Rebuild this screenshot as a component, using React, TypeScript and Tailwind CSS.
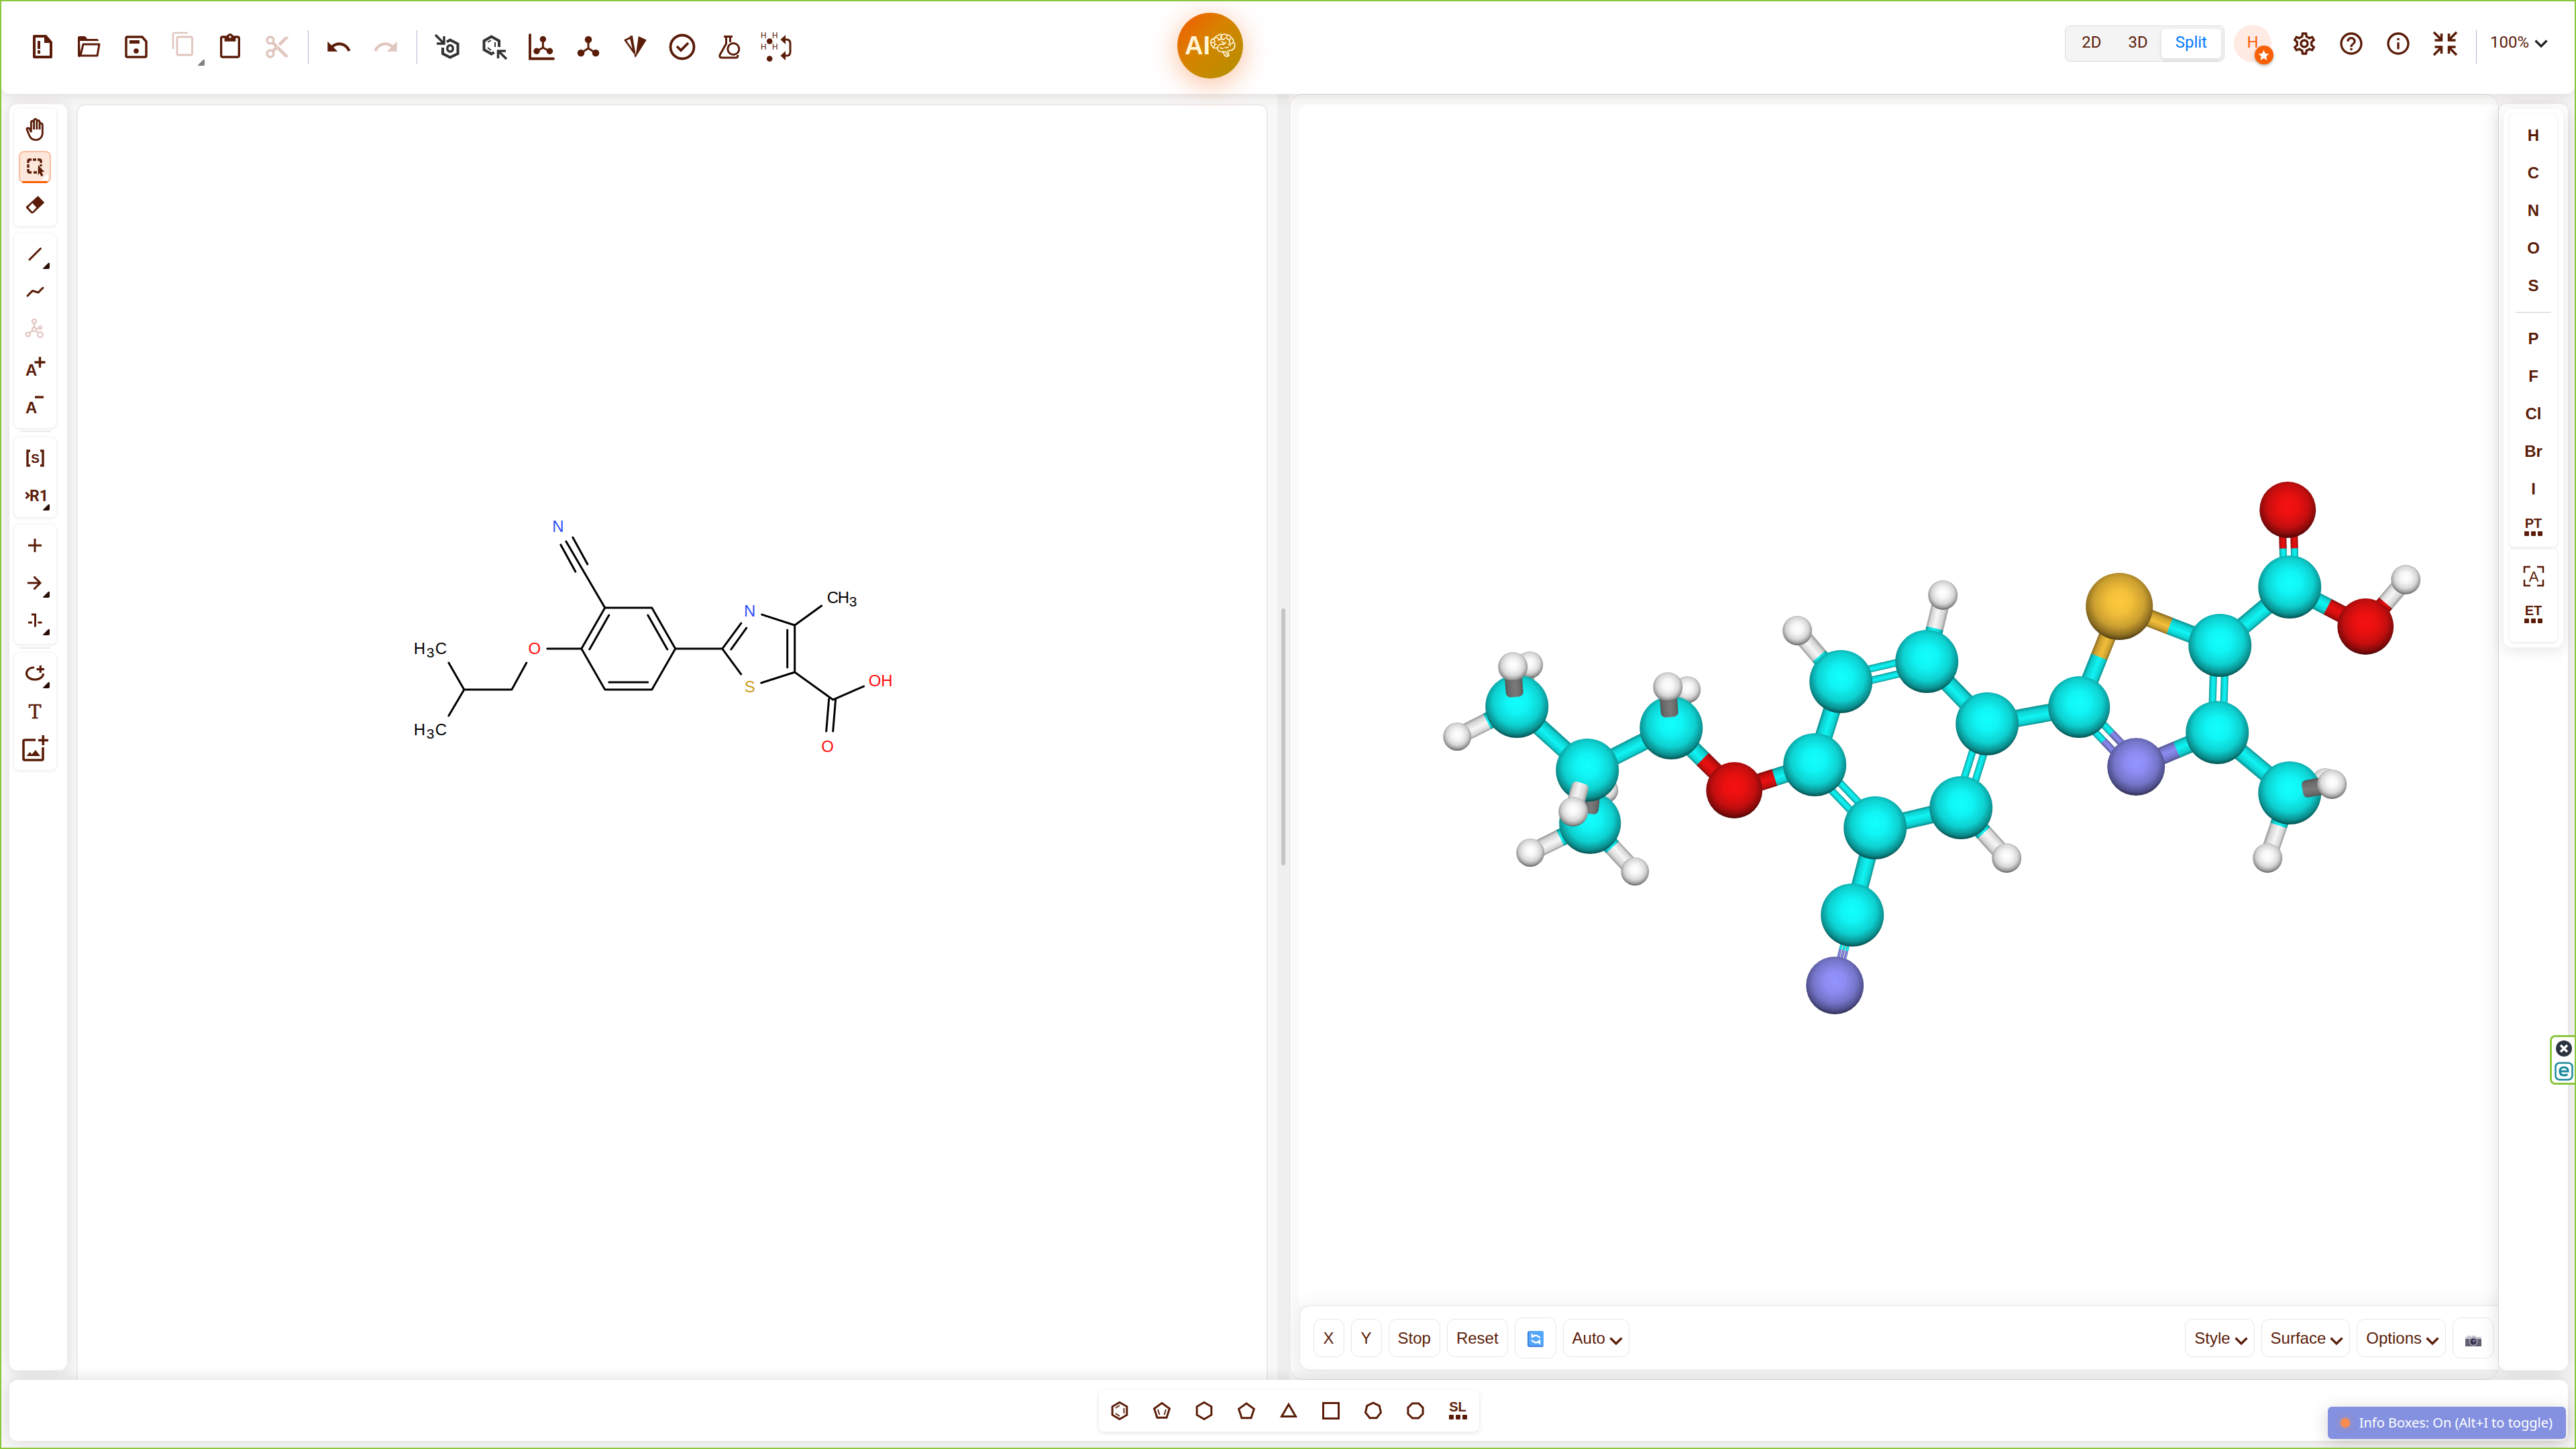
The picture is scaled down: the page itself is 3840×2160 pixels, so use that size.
import React from "react";
import {
  MdContentPaste,
  MdContentCut,
  MdUndo,
  MdRedo,
  MdOutlineSettings,
  MdHelpOutline,
  MdInfoOutline,
  MdOutlineBackHand,
  MdStar,
} from "react-icons/md";

type Kids = { children?: React.ReactNode };

function Icon({ children, className = "" }: Kids & { className?: string }) {
  return (
    <svg
      viewBox="0 0 40 40"
      className={`size-10 overflow-visible ${className}`}
      fill="none"
      stroke="currentColor"
      strokeWidth={3}
      aria-hidden="true"
    >
      {children}
    </svg>
  );
}

/* ---------- header ---------- */

function TopButton({ label, children, muted, more }: Kids & { label: string; muted?: boolean; more?: boolean }) {
  return (
    <button
      type="button"
      aria-label={label}
      title={label}
      className={`relative flex size-14 shrink-0 items-center justify-center ${muted ? "text-[#e0c6be]" : "text-[#5a1c08]"}`}
    >
      {children}
      {more && (
        <svg viewBox="0 0 10 10" className="absolute -right-1 bottom-0 size-2.5 fill-[#808080]" aria-hidden="true">
          <path d="M0 9 8 1q2-1 2 1v6q0 2-2 2H1Q0 10 0 9z" />
        </svg>
      )}
    </button>
  );
}

function Divider() {
  return <div className="mr-[3px] ml-1 h-[50px] w-px shrink-0 bg-[#b4b6cc]" />;
}

function FileIcon() {
  return (
    <Icon>
      <path d="M9 4h16l8 9v22H8V4z" strokeWidth={4} strokeLinejoin="round" />
      <path d="M23 3v11h12L26 2z" fill="currentColor" stroke="none" />
      <path d="M13 11h4v12h-4zM13 25h4v5h-4z" fill="currentColor" stroke="none" />
    </Icon>
  );
}

function FolderIcon() {
  return (
    <Icon>
      <path
        d="M5 4h9l3 4h14q3 0 3 3H6l1 20-1 4H5q-2 0-2-3V6q0-2 2-2z"
        fill="currentColor"
        stroke="none"
      />
      <path d="M11 16h24l-3 17H7z" strokeLinejoin="round" />
    </Icon>
  );
}

function SaveIcon() {
  return (
    <Icon>
      <path d="M5 7q0-2 2-2h22l6 7v21q0 2-2 2H7q-2 0-2-2z" strokeWidth={3.5} />
      <path d="M10 10h15v5H10z" fill="currentColor" stroke="none" />
      <circle cx={20} cy={26} r={3.8} fill="currentColor" stroke="none" />
    </Icon>
  );
}

function CopyIcon() {
  return (
    <Icon>
      <path d="M5 23V1q0-2 2-2h20" strokeWidth={2.6} />
      <rect x={11} y={5} width={22.5} height={27} rx={2} strokeWidth={2.8} />
    </Icon>
  );
}

function ImportIcon() {
  return (
    <Icon className="text-[#333333]">
      <path d="M2 2l13 13M15 4v11H4" strokeWidth={3.5} />
      <path d="M19 12.5l5-3 11.5 6V30L24 35.500 13 30V21" strokeWidth={4} />
      <ellipse cx={24} cy={22.3} rx={4.2} ry={4.8} strokeWidth={3.5} />
    </Icon>
  );
}

function ExportIcon() {
  return (
    <Icon className="text-[#333333]">
      <path d="M27 20v-9L15.500 4.500 4.500 11v13l11 6.500 4-2.500" strokeWidth={4} />
      <path d="M10 13l5-3M10 21l5 4M21 13v7" strokeWidth={2} />
      <path d="M38 38L26 26M25.500 37V26H37" strokeWidth={3.5} />
    </Icon>
  );
}

function AxesIcon() {
  return (
    <Icon>
      <path d="M3 2v35.500h35" strokeWidth={3.8} strokeLinecap="round" />
      <path d="M22.400 9v12L13 26.300M22.400 21l10 5.300" />
      <g fill="currentColor" stroke="none">
        <circle cx={22.4} cy={8.5} r={4.7} />
        <circle cx={13} cy={26.3} r={4.7} />
        <circle cx={32.5} cy={26.3} r={4.7} />
      </g>
    </Icon>
  );
}

function MoleculeIcon() {
  return (
    <Icon>
      <path d="M20 9v13L9 29M20 22l11 7" />
      <g fill="currentColor" stroke="none">
        <circle cx={20} cy={9} r={5.3} />
        <circle cx={9} cy={29} r={5.3} />
        <circle cx={31} cy={29} r={5.3} />
      </g>
    </Icon>
  );
}

function WedgeIcon() {
  return (
    <Icon>
      <path d="M5 10l8-4 5.500 23z" strokeWidth={2.6} />
      <path d="M24.800 4l12 5.500L20.300 35.500z" fill="currentColor" stroke="none" />
      <path d="M12 5l3-1 5.300 31" strokeWidth={2} />
    </Icon>
  );
}

function CheckIcon() {
  return (
    <Icon>
      <circle cx={20} cy={20} r={17.5} strokeWidth={3.8} />
      <path d="M12 19l6 6 11-11" strokeWidth={3.8} />
    </Icon>
  );
}

function FlaskIcon() {
  return (
    <Icon>
      <path d="M12 4.500h13" />
      <path d="M15.500 5v10L6 32q-1 4 3 4h21q3 0 3-4M21.500 5v8" />
      <circle cx={26.3} cy={23} r={8.5} />
    </Icon>
  );
}

function HydrogenIcon() {
  return (
    <Icon>
      <g fill="currentColor" stroke="none" fontFamily="Roboto, sans-serif" fontSize={12}>
        <text x={-3} y={7}>H</text>
        <text x={14} y={7}>H</text>
        <text x={-3} y={24}>H</text>
        <text x={14} y={24}>H</text>
        <circle cx={10.2} cy={11.5} r={4.3} />
        <circle cx={10.2} cy={37.5} r={4.3} />
        <path d="M26.500 9L34 2v14zM26.500 33L34 26v14z" />
      </g>
      <path d="M33 9h3q5 0 5 6v12q0 6-5 6h-3" />
    </Icon>
  );
}

function ExitFullIcon() {
  return (
    <Icon>
      <path
        d="M3 3l11.500 11.500M14.500 5v10H4.500M37 3L25.500 14.500M25.500 5v10h10M3 37l11.500-11.500M4.500 25h10v10M37 37L25.500 25.500M25.500 35V25h10"
        strokeWidth={3.5}
      />
    </Icon>
  );
}

function BrainIcon() {
  return (
    <svg
      viewBox="0 0 38 36"
      className="h-9 w-[38px]"
      fill="none"
      stroke="#fff9dc"
      strokeWidth={1.7}
      strokeLinecap="round"
      strokeLinejoin="round"
      aria-hidden="true"
    >
      <path d="M11 21Q5 23 3 19 0 15 1 11 3 7 7 7 8 3 12 3 14 0 18 2 21 0 25 2 30 2 31 6 35 8 35 13 38 17 36 21 34 25 30 25L26 26 28 32Q26 36 22 33L19 27Q14 28 12 25 10 23 11 21z" />
      <path d="M1 14q4-2 6 1M4 8q3 1 3 4M8 6q4 0 5 3M12 10q5-1 5-5M18 2q-4 3-1 6 3 2 5-1M25 3q-2 5 3 6M30 8q-3 4 0 7 3 1 4-2M11 21q1-5 6-5 4 1 6-3M17 12q2 0 3 2M6 19q0-3 3-3M15 21q2 2 4 1M22 21q3 1 5-1M19 27h4l3 6M27 16q2 0 3 2" />
    </svg>
  );
}

function Chevron({ className = "" }: { className?: string }) {
  return (
    <svg viewBox="0 0 20 14" className={`h-3.5 w-5 ${className}`} fill="none" stroke="currentColor" aria-hidden="true">
      <path d="M1.500 2.500l8.500 8.500 8.500-8.500" strokeWidth={3.2} />
    </svg>
  );
}

function Header() {
  return (
    <header className="relative z-20 flex h-[138px] shrink-0 items-center rounded-b-xl bg-white shadow-[0_3px_18px_rgba(70,45,30,0.13)]">
      <nav aria-label="Main tools" className="flex w-[45.7%] shrink-0 items-center gap-3.5 pb-0.5 pl-[33px]">
        <TopButton label="New"><FileIcon /></TopButton>
        <TopButton label="Open"><FolderIcon /></TopButton>
        <TopButton label="Save"><SaveIcon /></TopButton>
        <TopButton label="Copy" muted more><CopyIcon /></TopButton>
        <TopButton label="Paste"><MdContentPaste className="size-10" /></TopButton>
        <TopButton label="Cut" muted><MdContentCut className="size-10" /></TopButton>
        <Divider />
        <TopButton label="Undo"><MdUndo className="size-10" /></TopButton>
        <TopButton label="Redo" muted><MdRedo className="size-10" /></TopButton>
        <Divider />
        <TopButton label="Import"><ImportIcon /></TopButton>
        <TopButton label="Export"><ExportIcon /></TopButton>
        <TopButton label="Layout"><AxesIcon /></TopButton>
        <TopButton label="Clean up"><MoleculeIcon /></TopButton>
        <TopButton label="Stereo"><WedgeIcon /></TopButton>
        <TopButton label="Check structure"><CheckIcon /></TopButton>
        <TopButton label="Analyse"><FlaskIcon /></TopButton>
        <TopButton label="Hydrogens"><HydrogenIcon /></TopButton>
      </nav>

      <button
        type="button"
        aria-label="AI assistant"
        className="mb-1.5 flex size-[98px] shrink-0 items-center justify-center rounded-full bg-[linear-gradient(135deg,#f25c00_5%,#d68400_45%,#b09000_100%)] shadow-[0_8px_40px_rgba(245,100,20,0.42)]"
      >
        <span className="font-['Liberation_Sans',Arial,sans-serif] text-[38px] leading-none font-bold text-[#fff4d4]">AI</span>
        <BrainIcon />
      </button>

      <div className="ml-auto flex items-center pr-10 pb-3 font-['Roboto',sans-serif] text-2xl text-[#5a1c08]">
        <div role="group" aria-label="View mode" className="flex rounded-lg border border-[#dcdcdc] bg-[#f4f4f4] p-1">
          <button type="button" className="h-11 px-5 pb-1">2D</button>
          <button type="button" className="h-11 px-5 pb-1">3D</button>
          <button type="button" className="h-11 rounded-md bg-white px-[21px] pb-1 text-[#007bff] shadow-[0_2px_6px_rgba(0,0,0,0.12)]">
            Split
          </button>
        </div>
        <button type="button" aria-label="Account" className="relative ml-3.5 flex size-14 items-center justify-center rounded-full bg-[#ffebe3] text-[#f96005]">
          <span className="pb-1">H</span>
          <span className="absolute -right-[3px] -bottom-[3px] flex size-7 items-center justify-center rounded-full bg-[#f96005] text-white shadow-[0_2px_4px_rgba(0,0,0,0.3)]">
            <MdStar className="size-[19px]" />
          </span>
        </button>
        <div className="ml-[21px] flex gap-3.5">
          <TopButton label="Settings"><MdOutlineSettings className="size-10" /></TopButton>
          <TopButton label="Help"><MdHelpOutline className="size-10" /></TopButton>
          <TopButton label="About"><MdInfoOutline className="size-10" /></TopButton>
          <TopButton label="Exit full screen"><ExitFullIcon /></TopButton>
        </div>
        <div className="mt-2.5 ml-[18px] h-[50px] w-px bg-[#b4b6cc]" />
        <button type="button" className="ml-5 flex items-center gap-2">
          <span className="pb-1">100%</span>
          <Chevron className="text-[#222222]" />
        </button>
      </div>
    </header>
  );
}

/* ---------- left toolbar ---------- */

function SideButton({ label, children, muted, more, active }: Kids & { label: string; muted?: boolean; more?: boolean; active?: boolean }) {
  return (
    <div className="flex h-14 items-center justify-center">
      <button
        type="button"
        aria-label={label}
        title={label}
        aria-pressed={active}
        className={`relative flex size-12 items-center justify-center rounded-lg ${
          active ? "border-2 border-[#f9bd9c] bg-[#fde6da]" : ""
        } ${muted ? "text-[#e0c6be]" : "text-[#5a1c08]"}`}
      >
        {children}
        {active && <span className="absolute inset-x-[3px] -bottom-0.5 h-[3px] rounded-sm bg-[#f96005]" />}
        {(more || active) && (
          <svg
            viewBox="0 0 10 10"
            className={`absolute bottom-0.5 size-2.5 ${active ? "right-0.5 fill-white" : "right-0.5 fill-[#2a0e06]"}`}
            aria-hidden="true"
          >
            <path d="M0 9 8 1q2-1 2 1v6q0 2-2 2H1Q0 10 0 9z" />
          </svg>
        )}
      </button>
    </div>
  );
}

function SideCard({ children, tall }: Kids & { tall?: boolean }) {
  return (
    <div className={`rounded-lg bg-white pt-[3px] pr-px shadow-[0_1px_5px_rgba(0,0,0,0.11)] ${tall ? "pb-[7px]" : "pb-1"}`}>
      {children}
    </div>
  );
}

const sans = "'Liberation Sans', Arial, sans-serif";

function LeftToolbar() {
  return (
    <aside aria-label="Drawing tools" className="z-10 mt-[15px] mb-3.5 w-[86px] shrink-0 rounded-xl bg-white pt-[7px] pr-4 pl-[7px] shadow-[0_2px_20px_rgba(60,40,40,0.14)]">
      <SideCard>
        <SideButton label="Hand"><MdOutlineBackHand className="size-[34px]" /></SideButton>
        <SideButton label="Select" active>
          <Icon>
            <path d="M10 14v-3q0-2 2-2h3M24 9h3q2 0 2 2v3M10 23v3q0 2 2 2h3M17 9h5M10 16v5M29 16v3M18 28h5" strokeWidth={3.4} />
            <path d="M25 17l9 10-4 .5 2.500 5-3 1.500-2.500-5-2.500 3z" fill="currentColor" stroke="none" />
          </Icon>
        </SideButton>
        <SideButton label="Erase">
          <Icon>
            <path d="M24.700 7l9.500 10L18 32.500q-2 1.500-4 0L7 25q-.5-1 0-2z" fill="currentColor" stroke="none" />
            <path d="M16.300 17.700l6 6.500-6 6.500-6-6.500z" fill="white" stroke="none" />
          </Icon>
        </SideButton>
      </SideCard>
      <div className="h-[11px]" />
      <SideCard tall>
        <SideButton label="Bond" more>
          <Icon><path d="M12 28l16.500-16.500" strokeLinecap="round" /></Icon>
        </SideButton>
        <SideButton label="Chain">
          <Icon><path d="M9 26l7.500-7.500 8.500 2.500 7-7" strokeLinecap="round" /></Icon>
        </SideButton>
        <SideButton label="3D template" muted>
          <Icon>
            <g strokeWidth={2.2}>
              <circle cx={19} cy={8} r={3} />
              <circle cx={19} cy={20} r={3} />
              <circle cx={9.7} cy={27.5} r={3} />
              <circle cx={28} cy={28} r={3.8} />
              <circle cx={28} cy={17.3} r={2} />
              <path d="M19 11v6M16.500 22l-4.500 3.500M21.500 22l3.500 3.500M22 19.500l4-1.500" />
            </g>
          </Icon>
        </SideButton>
        <SideButton label="Charge plus">
          <Icon>
            <text x={6} y={33} fontFamily={sans} fontWeight={700} fontSize={24} fill="currentColor" stroke="none">A</text>
            <path d="M27.500 5v16M19.500 13h16" strokeWidth={3.4} />
          </Icon>
        </SideButton>
        <SideButton label="Charge minus">
          <Icon>
            <text x={6} y={33} fontFamily={sans} fontWeight={700} fontSize={24} fill="currentColor" stroke="none">A</text>
            <path d="M20 9h13" strokeWidth={3.4} />
          </Icon>
        </SideButton>
      </SideCard>
      <div className="flex h-3.5 flex-col items-center pt-1"><div className="h-0.5 w-[45px] bg-[#efe9e7]" /></div>
      <SideCard>
        <SideButton label="S-group">
          <Icon>
            <path d="M13 9H9v22h4M28 9h4v22h-4" strokeWidth={3.4} />
            <text x={20.5} y={27} textAnchor="middle" fontFamily={sans} fontWeight={700} fontSize={19} fill="currentColor" stroke="none">S</text>
          </Icon>
        </SideButton>
        <SideButton label="R-group" more>
          <Icon>
            <path d="M6.500 15l4.500 4.500L6.500 24" />
            <text x={12} y={28} fontFamily="Roboto, sans-serif" fontWeight={700} fontSize={23} fill="currentColor" stroke="none">R1</text>
          </Icon>
        </SideButton>
      </SideCard>
      <div className="h-[11px]" />
      <SideCard tall>
        <SideButton label="Reaction plus">
          <Icon><path d="M20 10v20M10 20h20" /></Icon>
        </SideButton>
        <SideButton label="Reaction arrow" more>
          <Icon><path d="M9 20h19M18.500 10.500l9.500 9.500-9.500 9.500" /></Icon>
        </SideButton>
        <SideButton label="Atom mapping" more>
          <Icon><path d="M10 23h6M24.500 23h6M15 11h5.500v18.500" /></Icon>
        </SideButton>
      </SideCard>
      <div className="flex h-[13px] flex-col items-center pt-[5px]"><div className="h-0.5 w-[45px] bg-[#efe9e7]" /></div>
      <SideCard>
        <SideButton label="Shape" more>
          <Icon>
            <path d="M19 11C12 11 7.500 15 7.500 20c0 5 5.500 9 12.500 9s12.500-4 12.500-9" strokeWidth={3.2} />
            <path d="M28.300 8v11M22.500 13.700h11.500" strokeWidth={3.2} />
          </Icon>
        </SideButton>
        <SideButton label="Text">
          <Icon>
            <text x={20} y={31} textAnchor="middle" fontFamily="'DejaVu Serif', serif" fontSize={28} fill="currentColor" stroke="currentColor" strokeWidth={0.6}>T</text>
          </Icon>
        </SideButton>
        <SideButton label="Add image">
          <Icon>
            <path d="M21 7H5q-2 0-2 2v26q0 2 2 2h25q2 0 2-2V18" strokeWidth={3.6} />
            <path d="M32.300 0v15M25 7.500h15" strokeWidth={3.6} />
            <path d="M7.500 31l5-6 3 3.500 5.500-6.500 7 9z" fill="currentColor" stroke="none" />
          </Icon>
        </SideButton>
      </SideCard>
    </aside>
  );
}

/* ---------- 2D structure ---------- */

const BLUE = "#304ff7";
const RED = "#ff0d0d";

function Structure2D() {
  return (
    <svg
      viewBox="116 157 1772 1900"
      className="h-full w-full"
      role="img"
      aria-label="Structural formula"
      stroke="#000"
      strokeWidth={3}
      strokeLinecap="round"
      strokeLinejoin="round"
      fill="none"
    >
      <path d="M836 812l22 40M844 807l58 99M854 801l22 40" />
      <path d="M902 906h70l35 61-35 61h-70l-35-61z" />
      <path d="M908 917l-29 51M966 917l29 51M908 1017h58" />
      <path d="M867 967h-51M785 988l-22 40h-71l-23-40M692 1028l-23 39" />
      <path d="M1007 967h70l28-38M1090 968l23-32M1077 967l28 38" />
      <path d="M1136 916l49 16v70l-50 16M1174 939v56M1185 932l40-29" />
      <path d="M1185 1002l57 41 46-20M1236 1042l-4 48M1246 1042l-4 48" />
      <g stroke="none" fontFamily={sans} fontSize={24} textAnchor="middle">
        <text x={832} y={793} fill={BLUE}>N</text>
        <text x={797} y={975} fill={RED}>O</text>
        <text x={1118} y={919} fill={BLUE}>N</text>
        <text x={1118} y={1032} fill="#c99a19">S</text>
        <text x={1313} y={1023} fill={RED}>OH</text>
        <text x={1234} y={1121} fill={RED}>O</text>
      </g>
      <g stroke="none" fill="#000" fontFamily={sans} fontSize={24}>
        <text x={617} y={975}>H</text>
        <text x={636} y={980} fontSize={21}>3</text>
        <text x={649} y={975}>C</text>
        <text x={617} y={1096}>H</text>
        <text x={636} y={1101} fontSize={21}>3</text>
        <text x={649} y={1096}>C</text>
        <text x={1233} y={899}>C</text>
        <text x={1249} y={899}>H</text>
        <text x={1266} y={904} fontSize={21}>3</text>
      </g>
    </svg>
  );
}

/* ---------- 3D model ---------- */

type El = "C" | "N" | "O" | "S" | "H" | "G";

const shades: Record<El, [string, string, string, string, string]> = {
  C: ["#12ffff", "#10f4f4", "#0ed0d0", "#0a8e8e", "#054646"],
  N: ["#9494ff", "#8c8cf2", "#7474c8", "#4f4f8c", "#282848"],
  O: ["#f51111", "#ea1010", "#c40e0e", "#840a0a", "#420505"],
  S: ["#ffc93c", "#f2bf39", "#cb9f30", "#8a6b20", "#46350f"],
  H: ["#ffffff", "#f6f6f6", "#d6d6d6", "#989898", "#525252"],
  G: ["#8a8a8a", "#7a7a7a", "#6a6a6a", "#555555", "#444444"],
};

const atoms: Record<string, [number, number, number, El]> = {
  O1: [3409, 760, 42, "O"],
  CX: [3412, 875, 47, "C"],
  OH: [3525, 934, 42, "O"],
  HO: [3585, 864, 22, "H"],
  C5: [3308, 962, 47, "C"],
  S: [3158, 904, 50, "S"],
  C2: [3098, 1054, 46, "C"],
  N: [3183, 1143, 43, "N"],
  C4: [3304, 1092, 47, "C"],
  CM: [3412, 1182, 47, "C"],
  HM1: [3475, 1169, 22, "H"],
  HM2: [3465, 1165, 20, "H"],
  HM3: [3379, 1279, 22, "H"],
  R1: [2961, 1079, 47, "C"],
  R2: [2871, 986, 47, "C"],
  R3: [2743, 1016, 47, "C"],
  R4: [2704, 1140, 47, "C"],
  R5: [2794, 1234, 47, "C"],
  R6: [2922, 1204, 47, "C"],
  H2: [2895, 887, 22, "H"],
  H3: [2678, 940, 22, "H"],
  H6: [2990, 1279, 22, "H"],
  CN: [2760, 1364, 47, "C"],
  NN: [2734, 1469, 43, "N"],
  OE: [2584, 1178, 42, "O"],
  CE: [2490, 1085, 47, "C"],
  HE1: [2485, 1024, 22, "H"],
  HE2: [2514, 1028, 20, "H"],
  CH: [2365, 1148, 47, "C"],
  HC: [2344, 1210, 22, "H"],
  CB: [2369, 1227, 46, "C"],
  HB1: [2280, 1271, 21, "H"],
  HB2: [2436, 1299, 21, "H"],
  HB3: [2392, 1178, 19, "H"],
  CA: [2260, 1053, 47, "C"],
  HA1: [2254, 994, 22, "H"],
  HA2: [2279, 991, 20, "H"],
  HA3: [2171, 1098, 21, "H"],
};

function Atom({ id }: { id: string }) {
  const [x, y, r, el] = atoms[id];
  return <circle cx={x} cy={y} r={r} fill={`url(#ball${el})`} />;
}

function Bond({ a, b, n = 1 }: { a: string; b: string; n?: number }) {
  const [x1, y1, , e1] = atoms[a];
  const [x2, y2, , e2] = atoms[b];
  const len = Math.hypot(x2 - x1, y2 - y1);
  const angle = (Math.atan2(y2 - y1, x2 - x1) * 180) / Math.PI;
  const w = n === 1 ? 26 : n === 2 ? 11 : 4;
  const step = n === 2 ? 17 : 5;
  return (
    <g transform={`translate(${x1} ${y1}) rotate(${angle})`}>
      {Array.from({ length: n }, (_, i) => {
        const y = (i - (n - 1) / 2) * step - w / 2;
        return (
          <g key={i}>
            <rect x={0} y={y} width={len / 2 + 0.5} height={w} fill={`url(#rod${e1})`} />
            <rect x={len / 2} y={y} width={len / 2} height={w} fill={`url(#rod${e2})`} />
          </g>
        );
      })}
    </g>
  );
}

function FrontRod({ x1, y1, x2, y2, el }: { x1: number; y1: number; x2: number; y2: number; el: El }) {
  const len = Math.hypot(x2 - x1, y2 - y1);
  const angle = (Math.atan2(y2 - y1, x2 - x1) * 180) / Math.PI;
  return (
    <g transform={`translate(${x1} ${y1}) rotate(${angle})`}>
      <rect x={0} y={-13} width={len} height={26} rx={7} fill={`url(#rod${el})`} />
    </g>
  );
}

function Model3D() {
  const els: El[] = ["C", "N", "O", "S", "H", "G"];
  return (
    <svg viewBox="1936 156 1787 1790" className="h-full w-full" role="img" aria-label="Ball and stick model">
      <defs>
        {els.map((el) => (
          <radialGradient key={el} id={`ball${el}`} cx="50%" cy="43%" r="58%">
            <stop offset="0" stopColor={shades[el][0]} />
            <stop offset=".32" stopColor={shades[el][1]} />
            <stop offset=".65" stopColor={shades[el][2]} />
            <stop offset=".87" stopColor={shades[el][3]} />
            <stop offset="1" stopColor={shades[el][4]} />
          </radialGradient>
        ))}
        {els.map((el) => (
          <linearGradient key={el} id={`rod${el}`} x1="0" y1="0" x2="0" y2="1">
            <stop offset="0" stopColor={shades[el][3]} />
            <stop offset=".15" stopColor={shades[el][2]} />
            <stop offset=".45" stopColor={shades[el][1]} />
            <stop offset=".8" stopColor={shades[el][2]} />
            <stop offset="1" stopColor={shades[el][3]} />
          </linearGradient>
        ))}
      </defs>

      <Bond a="CA" b="HA2" />
      <Atom id="HA2" />
      <Bond a="CE" b="HE2" />
      <Atom id="HE2" />
      <Atom id="HM2" />
      <Atom id="HB3" />

      <Bond a="O1" b="CX" n={2} />
      <Bond a="CX" b="OH" />
      <Bond a="OH" b="HO" />
      <Bond a="CX" b="C5" />
      <Bond a="C5" b="S" />
      <Bond a="C5" b="C4" n={2} />
      <Bond a="S" b="C2" />
      <Bond a="C2" b="N" n={2} />
      <Bond a="N" b="C4" />
      <Bond a="C4" b="CM" />
      <Bond a="CM" b="HM3" />
      <Bond a="C2" b="R1" />
      <Bond a="R1" b="R2" />
      <Bond a="R2" b="R3" n={2} />
      <Bond a="R3" b="R4" />
      <Bond a="R4" b="R5" n={2} />
      <Bond a="R5" b="R6" />
      <Bond a="R6" b="R1" n={2} />
      <Bond a="R2" b="H2" />
      <Bond a="R3" b="H3" />
      <Bond a="R6" b="H6" />
      <Bond a="R5" b="CN" />
      <Bond a="CN" b="NN" n={3} />
      <Bond a="R4" b="OE" />
      <Bond a="OE" b="CE" />
      <Bond a="CE" b="CH" />
      <Bond a="CH" b="CA" />
      <Bond a="CA" b="HA3" />
      <Bond a="CB" b="HB1" />
      <Bond a="CB" b="HB2" />

      {["HO", "HM3", "H2", "H3", "H6", "HA3", "HB1", "HB2", "CB"].map((id) => (
        <Atom key={id} id={id} />
      ))}
      <FrontRod x1={2371} y1={1185} x2={2368} y2={1213} el="G" />
      {["O1", "CX", "OH", "C5", "S", "C2", "N", "C4", "CM", "R1", "R2", "R3", "R4", "R6", "R5", "CN", "NN", "OE", "CE", "CH", "CA"].map((id) => (
        <Atom key={id} id={id} />
      ))}

      <FrontRod x1={2254} y1={1000} x2={2257} y2={1039} el="G" />
      <Atom id="HA1" />
      <FrontRod x1={2485} y1={1030} x2={2488} y2={1069} el="G" />
      <Atom id="HE1" />
      <FrontRod x1={2345} y1={1205} x2={2356} y2={1167} el="H" />
      <Atom id="HC" />
      <FrontRod x1={3470} y1={1170} x2={3431} y2={1177} el="G" />
      <Atom id="HM1" />
    </svg>
  );
}

function ModelButton({ children, menu }: Kids & { menu?: boolean }) {
  return (
    <button type="button" className="flex h-[57px] min-w-[46px] items-center justify-center gap-1.5 rounded-xl border border-[#e9e4e3] bg-white px-[13px]">
      {children}
      {menu && <Chevron className="mt-2 -mr-1" />}
    </button>
  );
}

function ModelBar() {
  return (
    <div className="-mr-5 flex h-[97px] shrink-0 items-center justify-between rounded-2xl border border-[#e9e7e7] bg-white pr-[26px] pl-5 font-['Liberation_Sans',Arial,sans-serif] text-2xl text-[#5a1c08] shadow-[0_0_32px_rgba(0,0,0,0.07)]">
      <div className="flex items-center gap-2.5">
        <ModelButton>X</ModelButton>
        <ModelButton>Y</ModelButton>
        <ModelButton>Stop</ModelButton>
        <ModelButton>Reset</ModelButton>
        <button type="button" aria-label="Refresh" className="flex h-[61px] w-[62px] items-center justify-center rounded-xl border border-[#e9e4e3]">
          <svg viewBox="0 0 24 24" className="mt-0.5 size-6" aria-hidden="true">
            <rect width={24} height={24} rx={3} fill="#3f7fe0" />
            <rect x={2} width={22} height={22} rx={2.5} fill="#54a6fa" />
            <path d="M7 10V6l2 2q4-3 8 1l2 1M18 13v5l-2-2q-4 3-8-1l-2-1" fill="none" stroke="#fff" strokeWidth={2.4} />
          </svg>
        </button>
        <ModelButton menu>Auto</ModelButton>
      </div>
      <div className="flex items-center gap-2.5">
        <ModelButton menu>Style</ModelButton>
        <ModelButton menu>Surface</ModelButton>
        <ModelButton menu>Options</ModelButton>
        <button type="button" aria-label="Take picture" className="flex h-[61px] w-[61px] items-center justify-center rounded-xl border border-[#e9e4e3]">
          <svg viewBox="0 0 24 18" className="mt-2 h-[18px] w-6" aria-hidden="true">
            <path d="M0 4h24v13H0z" fill="#605e70" />
            <path d="M0 3h3V1h5v2h1l1-2h5l1 2h8v3H0z" fill="#c6c4cf" />
            <circle cx={12} cy={10} r={6.5} fill="#a9a7b6" />
            <circle cx={12} cy={10} r={4.8} fill="#3b3550" />
            <circle cx={13} cy={9} r={1.8} fill="#8d7db5" />
          </svg>
        </button>
      </div>
    </div>
  );
}

/* ---------- right toolbar ---------- */

function ElementButton({ children, label }: Kids & { label?: string }) {
  return (
    <button type="button" aria-label={label} className="flex h-14 w-full items-center justify-center">
      {children}
    </button>
  );
}

function DotsLabel({ text }: { text: string }) {
  return (
    <span className="flex flex-col items-center gap-1 text-xl leading-4">
      {text}
      <span className="flex gap-[3px]">
        <span className="h-[7px] w-[7px] rounded-[1px] bg-current" />
        <span className="h-[7px] w-[7px] rounded-[1px] bg-current" />
        <span className="h-[7px] w-[7px] rounded-[1px] bg-current" />
      </span>
    </span>
  );
}

function RightToolbar() {
  return (
    <aside
      aria-label="Atoms"
      className="z-10 mt-[15px] mb-3.5 w-[103px] shrink-0 rounded-xl bg-white px-[7px] pt-[7px] font-['Liberation_Sans',Arial,sans-serif] text-2xl font-bold text-[#5a1c08] shadow-[0_2px_24px_rgba(60,40,40,0.16)]"
    >
      <div className="rounded-xl px-[9px] py-2 shadow-[0_4px_20px_rgba(60,40,40,0.12)]">
        <div className="rounded-lg pt-1 pb-[3px] shadow-[0_1px_4px_rgba(0,0,0,0.12)]">
          {["H", "C", "N", "O", "S"].map((e) => (
            <ElementButton key={e}>{e}</ElementButton>
          ))}
          <div className="mx-[9px] my-[11px] h-px bg-[#c5ced9]" />
          {["P", "F", "Cl", "Br", "I"].map((e) => (
            <ElementButton key={e}>{e}</ElementButton>
          ))}
          <ElementButton label="Periodic table"><DotsLabel text="PT" /></ElementButton>
        </div>
        <div className="rounded-lg pt-[15px] pb-[14px] shadow-[0_1px_4px_rgba(0,0,0,0.12)]">
          <ElementButton label="Any atom">
            <svg viewBox="0 0 32 32" className="size-8" fill="none" stroke="currentColor" strokeWidth={2.5} aria-hidden="true">
              <path d="M11 2H2v9M21 2h9v9M11 30H2v-9M21 30h9v-9" />
              <text x={16} y={24} textAnchor="middle" fontFamily={sans} fontWeight={400} fontSize={22} fill="currentColor" stroke="none">A</text>
            </svg>
          </ElementButton>
          <ElementButton label="Extended table"><DotsLabel text="ET" /></ElementButton>
        </div>
      </div>
    </aside>
  );
}

/* ---------- bottom bar ---------- */

function polygon(n: number, r: number, turn = 0, cy = 20) {
  return Array.from({ length: n }, (_, i) => {
    const a = ((i + turn) / n) * Math.PI * 2 - Math.PI / 2;
    return `${(20 + r * Math.cos(a)).toFixed(2)},${(cy + r * Math.sin(a)).toFixed(2)}`;
  }).join(" ");
}

function RingButton({ label, children }: Kids & { label: string }) {
  return (
    <button type="button" aria-label={label} title={label} className="flex h-full w-[63px] items-center justify-center">
      {children}
    </button>
  );
}

function BottomBar() {
  return (
    <footer className="z-10 mr-2.5 mb-2.5 ml-3 flex h-[91px] shrink-0 items-center justify-center rounded-xl bg-white shadow-[0_0_22px_rgba(60,40,40,0.17)]">
      <div className="flex h-[62px] rounded-lg font-['Liberation_Sans',Arial,sans-serif] font-bold text-[#5a1c08] shadow-[0_2px_6px_rgba(0,0,0,0.11)]">
        <RingButton label="Benzene">
          <Icon>
            <polygon points={polygon(6, 12.5)} />
            <path d="M14 16l6-4M14 24l6 4M26.500 16v8" strokeWidth={1.8} />
          </Icon>
        </RingButton>
        <RingButton label="Cyclopentadiene">
          <Icon>
            <polygon points={polygon(5, 12, 0, 20.5)} />
            <path d="M14 18l2.500 8M26 18l-2.500 8" strokeWidth={1.8} />
          </Icon>
        </RingButton>
        <RingButton label="Cyclohexane"><Icon><polygon points={polygon(6, 12.5)} /></Icon></RingButton>
        <RingButton label="Cyclopentane"><Icon><polygon points={polygon(5, 12, 0, 21)} /></Icon></RingButton>
        <RingButton label="Cyclopropane"><Icon><path d="M20 10.500L30.500 28.500h-21z" /></Icon></RingButton>
        <RingButton label="Cyclobutane"><Icon><path d="M8.500 8.500h23v23h-23z" /></Icon></RingButton>
        <RingButton label="Cycloheptane"><Icon><polygon points={polygon(7, 11.8, 0, 20)} /></Icon></RingButton>
        <RingButton label="Cyclooctane"><Icon><polygon points={polygon(8, 12, 0.5)} /></Icon></RingButton>
        <RingButton label="Structure library"><DotsLabel text="SL" /></RingButton>
      </div>
    </footer>
  );
}

/* ---------- floating items ---------- */

function SideWidget() {
  return (
    <div className="absolute top-[1541px] -right-px z-30 flex h-[74px] w-[38px] flex-col items-center justify-around rounded-l-lg border-[3px] border-r-0 border-[#8cc63f] bg-white">
      <button type="button" aria-label="Close widget">
        <svg viewBox="0 0 26 26" className="size-[26px]" aria-hidden="true">
          <circle cx={13} cy={13} r={12} fill="#2b3440" />
          <path d="M8 8l10 10M18 8L8 18" stroke="#fff" strokeWidth={3.5} />
        </svg>
      </button>
      <button type="button" aria-label="Open widget">
        <svg viewBox="0 0 28 28" className="size-7" fill="none" stroke="#1a8a9c" aria-hidden="true">
          <rect x={1.5} y={1.5} width={25} height={25} rx={6} strokeWidth={2.5} />
          <path d="M8 14h12q0-6-6-6t-6 6 6 6q4 0 5-2" strokeWidth={3.2} />
        </svg>
      </button>
    </div>
  );
}

function Toast() {
  return (
    <div
      role="status"
      className="absolute right-[13px] bottom-[13px] z-30 flex h-12 items-center gap-3.5 rounded-md bg-[#8491e0] pr-5 pl-[19px] font-['Noto_Sans','Open_Sans',sans-serif] text-xl whitespace-nowrap text-white shadow-[0_4px_24px_rgba(60,40,40,0.2)]"
    >
      <span className="size-3.5 rounded-full bg-[#f98d4d] shadow-[0_0_10px_rgba(249,141,77,0.6)]" />
      Info Boxes: On (Alt+I to toggle)
    </div>
  );
}

export default function App() {
  return (
    <div className="relative flex h-screen w-full flex-col overflow-hidden border-2 border-[#8cc63f] bg-[#f8f8f8]">
      <Header />
      <main className="flex min-h-0 flex-1 pr-2.5 pl-3">
        <LeftToolbar />
        <section aria-label="2D editor" className="mt-[15px] ml-3.5 min-w-0 shrink grow-[1771] basis-0 rounded-t-xl border-2 border-b-0 border-[#f0eae9] bg-white">
          <Structure2D />
        </section>
        <div role="separator" aria-orientation="vertical" className="ml-3.5 flex w-[18px] shrink-0 items-center justify-center bg-[#efefef]">
          <div className="h-1/5 w-1.5 rounded-full bg-[#c4c4c4]" />
        </div>
        <section aria-label="3D viewer" className="flex min-w-0 shrink grow-[1787] basis-0 flex-col overflow-hidden rounded-[20px] border border-[#e6e2e1] bg-[#fafafa] pt-[15px] pb-[13px] pl-3.5">
          <div className="min-h-0 flex-1 rounded-tl-xl bg-white">
            <Model3D />
          </div>
          <ModelBar />
        </section>
        <RightToolbar />
      </main>
      <BottomBar />
      <SideWidget />
      <Toast />
    </div>
  );
}
